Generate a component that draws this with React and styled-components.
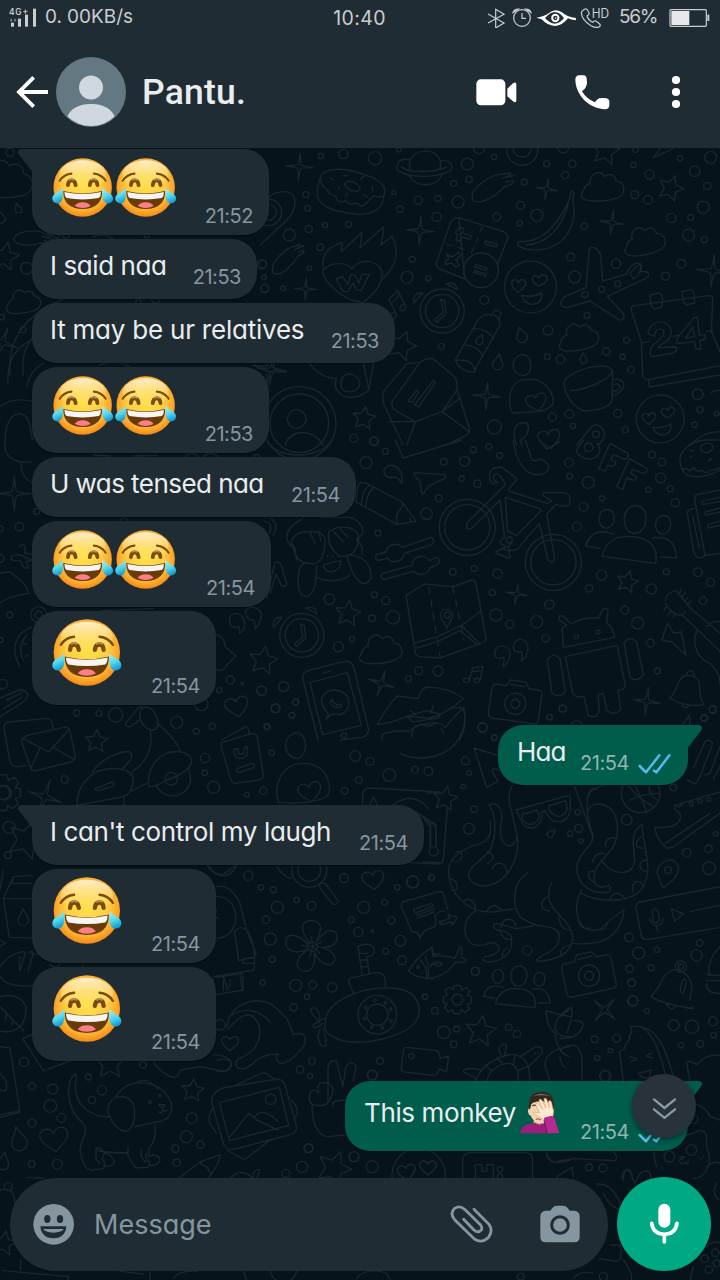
import React from "react";
import styled, { createGlobalStyle, css } from "styled-components";

const color = {
  bar: "#202c33",
  wall: "#06131a",
  doodle: "#19262c",
  incoming: "#202c33",
  outgoing: "#005c4b",
  text: "#e9edef",
  muted: "#8696a0",
  accent: "#00a884",
  tick: "#53bdeb",
  status: "#c9cdcf",
};

const GlobalStyle = createGlobalStyle`
  * { box-sizing: border-box; }
  body {
    margin: 0;
    background: ${color.wall};
    font-family: Inter, "Liberation Sans", sans-serif;
    font-feature-settings: "cv11" 1;
    font-optical-sizing: none;
  }
  svg { display: block; flex: none; }
`;

const Screen = styled.main`
  display: grid;
  grid-template-rows: 148px 1132px;
  width: 720px;
  height: 1280px;
  overflow: hidden;
`;

/* ---------- top ---------- */

const Top = styled.header`
  display: flex;
  flex-direction: column;
  background: ${color.bar};
`;

const StatusBar = styled.div`
  display: grid;
  grid-template-columns: 1fr auto 1fr;
  height: 36px;
  padding: 0 10px 0 9px;
  color: ${color.status};
  font-size: 19px;
  line-height: 34px;
`;

const StatusSide = styled.div`
  display: flex;
  align-items: center;
  height: 34px;
  justify-content: ${(p) => (p.$end ? "flex-end" : "flex-start")};
`;

const StatusText = styled.span`
  letter-spacing: ${(p) => p.$track || 0}px;
  margin-left: ${(p) => p.$ml || 0}px;
  white-space: nowrap;
`;

const ClockText = styled(StatusText)`
  font-size: 19.5px;
  line-height: 36px;
`;

const Dot = styled.span`
  margin-right: 5px;
`;

const StatusGlyph = styled.svg`
  margin-left: ${(p) => p.$ml || 0}px;
  fill: none;
  stroke: ${color.status};
  stroke-width: 3.6;
`;

const TitleBar = styled.div`
  display: flex;
  align-items: center;
  height: 112px;
  padding: 0 38px 0 16px;
`;

const ContactName = styled.h1`
  flex: 1;
  margin: 0 0 0 16px;
  color: ${color.text};
  font: 500 35.5px/42px Roboto, sans-serif;
  letter-spacing: 0.2px;
`;

const Actions = styled.div`
  display: flex;
  align-items: center;
`;

const ActionSlot = styled.span`
  margin-right: ${(p) => p.$mr}px;
  padding-top: 1px;
`;

const Avatar = styled.svg`
  margin-left: 7px;
`;

/* ---------- chat ---------- */

const Chat = styled.section`
  display: grid;
  grid-template: 1132px / 720px;
  background: ${color.wall};
  > * { grid-area: 1 / 1; }
`;

const Wall = styled.svg`
  fill: none;
  stroke: ${color.doodle};
  stroke-width: 4.2;
  stroke-linecap: round;
  stroke-linejoin: round;
`;

const Foreground = styled.div`
  display: flex;
  flex-direction: column;
  justify-content: space-between;
  z-index: 1;
`;

const Messages = styled.div`
  display: flex;
  flex-direction: column;
  gap: 4px;
  padding: 1px 32px 0;
`;

const Bubble = styled.div`
  position: relative;
  display: flex;
  justify-content: space-between;
  align-items: flex-end;
  align-self: ${(p) => (p.$out ? "flex-end" : "flex-start")};
  width: ${(p) => p.$w}px;
  height: ${(p) => p.$h}px;
  margin-top: ${(p) => (p.$gap ? 16 : 0)}px;
  padding: 0 16px 0 ${(p) => (p.$emoji ? 20 : p.$out ? 19 : 18)}px;
  border-radius: 25px;
  background: ${(p) => (p.$out ? color.outgoing : color.incoming)};
  box-shadow: 0 1px 1px rgba(0, 0, 0, 0.35);
  ${(p) => p.$tail && (p.$out
    ? css`border-top-right-radius: 0;`
    : css`border-top-left-radius: 0;`)}
`;

const Tail = styled.svg`
  position: absolute;
  top: 0;
  ${(p) => (p.$out ? "right: -14px; transform: scaleX(-1);" : "left: -14px;")}
  fill: ${(p) => (p.$out ? color.outgoing : color.incoming)};
`;

const Body = styled.div`
  display: flex;
  align-self: flex-start;
  padding-top: ${(p) => p.$pt}px;
  color: ${color.text};
  font-size: 26px;
  line-height: 32px;
  letter-spacing: ${(p) => p.$track || 0}px;
  white-space: pre;
`;

const Meta = styled.div`
  display: flex;
  align-items: flex-end;
  gap: 9px;
  padding-bottom: ${(p) => p.$pb}px;
  color: ${(p) => (p.$out ? "#91b6ad" : color.muted)};
  font-size: 20px;
  line-height: 24px;
  letter-spacing: -0.45px;
`;

const Composer = styled.footer`
  display: flex;
  gap: 9px;
  align-items: flex-end;
  padding: 0 9px 9px 10px;
`;

const Field = styled.div`
  display: flex;
  align-items: center;
  width: 598px;
  height: 93px;
  padding: 0 28px 0 23px;
  border-radius: 47px;
  background: ${color.incoming};
`;

const Placeholder = styled.span`
  flex: 1;
  margin-left: 20px;
  color: ${color.muted};
  font-size: 27px;
  line-height: 34px;
`;

const CameraSlot = styled.span`
  margin-left: 47px;
  padding-bottom: 2px;
`;

const MicButton = styled.button`
  display: grid;
  place-items: center;
  width: 94px;
  height: 94px;
  padding: 0;
  border: 0;
  border-radius: 50%;
  background: ${color.accent};
`;

const JumpButton = styled.button`
  position: absolute;
  right: -8px;
  top: -7px;
  display: grid;
  place-items: center;
  width: 64px;
  height: 64px;
  padding: 6px 0 0;
  border: 0;
  border-radius: 50%;
  background: #28323a;
  box-shadow: 0 2px 5px rgba(0, 0, 0, 0.45);
`;

/* ---------- drawings ---------- */

const JoyFace = ({ size }) => (
  <svg width={size * 1.04} height={size} viewBox="-104 -100 208 200" role="img" aria-label="face with tears of joy">
    <defs>
      <radialGradient id="joySkin" cx="0.5" cy="0.45" r="0.56">
        <stop offset="0" stopColor="#ffe04a" />
        <stop offset="0.55" stopColor="#fdcf45" />
        <stop offset="0.82" stopColor="#fbab2e" />
        <stop offset="1" stopColor="#f48512" />
      </radialGradient>
      <linearGradient id="joyShine" x1="0" y1="0" x2="0" y2="1">
        <stop offset="0" stopColor="#fff1d6" stopOpacity="0.95" />
        <stop offset="1" stopColor="#ffe870" stopOpacity="0" />
      </linearGradient>
      <linearGradient id="joyTear" x1="0" y1="0" x2="0.3" y2="1">
        <stop offset="0" stopColor="#b4f3f5" />
        <stop offset="0.6" stopColor="#54d5ea" />
        <stop offset="1" stopColor="#159fd6" />
      </linearGradient>
    </defs>
    <circle r="99" fill="url(#joySkin)" />
    <ellipse cy="-44" rx="78" ry="48" fill="url(#joyShine)" />
    <path d="M-66 12Q0 28 66 12Q66 72 0 73Q-66 72 -66 12Z" fill="#693b09" />
    <path d="M-62 15Q0 29 62 15Q62 30 55 36Q0 45 -55 36Q-62 30 -62 15Z" fill="#f6f5f3" />
    <path d="M-27 63Q-20 50 0 50Q20 50 27 63Q0 76 -27 63Z" fill="#fb7f88" />
    <g fill="none" stroke="#7b4b0a" strokeLinecap="round">
      <path d="M-50 -8Q-49 -24 -38 -24Q-26 -24 -24 -8M24 -8Q26 -24 38 -24Q49 -24 50 -8" strokeWidth="13" />
      <path d="M-78 -23Q-63 -45 -38 -47M78 -23Q63 -45 38 -47" strokeWidth="7" />
    </g>
    <path d="M-46 -26Q-38 -31 -30 -26M30 -26Q38 -31 46 -26" fill="none" stroke="#a98a62" strokeWidth="6" strokeLinecap="round" />
    <path d="M-68 2Q-64 16 -68 35Q-72 54 -86 54Q-104 52 -103 36Q-101 24 -88 18Q-76 12 -68 2Z" fill="url(#joyTear)" />
    <path d="M68 2Q64 16 68 35Q72 54 86 54Q104 52 103 36Q101 24 88 18Q76 12 68 2Z" fill="url(#joyTear)" />
  </svg>
);

const FacepalmFigure = () => (
  <svg width="41" height="43" viewBox="538 92 123 129" role="img" aria-label="man facepalming">
    <path d="M582 168L606 194L628 176V206H582Z" fill="#dfb68f" />
    <path d="M541 219Q542 197 568 191L586 187Q602 198 618 186L640 219Z" fill="#9c1f7c" />
    <path d="M567 146Q562 149 568 163Q574 164 577 174Q588 190 606 190Q628 188 636 162Q643 161 642 146L636 120H574Z" fill="#f4d3b2" />
    <path d="M568 148Q562 96 605 94Q648 94 642 148Q638 147 637 132Q632 124 605 123Q579 123 574 134Q573 146 568 148Z" fill="#33281f" />
    <path d="M580 108Q604 92 632 108Q606 101 580 108Z" fill="#75685c" />
    <path d="M578 137Q584 132 591 136" fill="none" stroke="#51402f" strokeWidth="4" />
    <path d="M588 177Q598 173 604 179" fill="none" stroke="#8a4b40" strokeWidth="3" />
    <path d="M612 177Q600 171 583 161Q578 155 588 156L600 158L588 132Q588 126 594 129L609 147L598 120Q601 114 606 119L619 143L613 116Q617 111 621 117L629 142L627 123Q631 117 635 125L641 153Q642 168 634 177Z" fill="#ffead0" stroke="#d9ab82" strokeWidth="2" />
    <path d="M613 179Q612 170 620 170L636 166Q643 168 646 178L659 219H622Z" fill="#b42a91" />
    <path d="M613 180L622 219" stroke="#76145d" strokeWidth="3" />
  </svg>
);

const BackArrow = () => (
  <svg width="33" height="32" viewBox="48 228 99 96" fill="none" stroke="#fff" strokeWidth="11.5">
    <path d="M101 232L57 276L101 320M57 276H144" />
  </svg>
);

const VideoIcon = () => (
  <svg width="41" height="27" viewBox="347 239 123 81" fill="#fff">
    <rect x="348" y="240" width="87" height="78" rx="14" />
    <path d="M441 268L458 252Q468 245 468 256V302Q468 313 458 306L441 291Z" />
  </svg>
);

const CallIcon = () => (
  <svg width="35" height="35" viewBox="644 227 105 105" fill="#fff">
    <path d="M656 228H670Q678 229 679 238L680 249Q681 256 677 262Q674 269 665 276Q677 297 703 309Q711 300 716 297Q720 296 727 296L738 297Q747 299 747 307V318Q746 330 735 330C682 328 645 284 645 240Q646 229 656 228Z" />
  </svg>
);

const MenuDots = () => (
  <svg width="12" height="34" viewBox="-6 -17 12 34" fill="#fff">
    <circle cy="-12" r="4.1" /><circle r="4.1" /><circle cy="12" r="4.1" />
  </svg>
);

const DoubleTick = () => (
  <svg width="34" height="22" viewBox="712 156 102 66" fill="none" stroke={color.tick} strokeWidth="7.5" strokeLinejoin="round" strokeLinecap="round">
    <path d="M717 195L736 214L776 163M760 209L767 214L806 163" />
  </svg>
);

const TailShape = ({ out }) => (
  <Tail $out={out} width="15" height="23" viewBox="0 0 15 23">
    <path d="M15 0H3.2Q-1.3 .6 .6 5L14 22.5H15Z" />
  </Tail>
);

const SignalIcon = () => (
  <svg width="28" height="21" viewBox="27 22 84 63" fill={color.status}>
    <rect x="33" y="69" width="9" height="12" />
    <rect x="54" y="57" width="9" height="24" />
    <rect x="75" y="45" width="9" height="36" />
    <rect x="99" y="27" width="9" height="54" />
    <text x="27" y="47" fontSize="25" fontWeight="600" textLength="57">4G+</text>
    <path d="M29 62L36 56V67ZM50 62L43 56V67Z" opacity="0.55" />
  </svg>
);

const StatusIcons = () => (
  <>
    <StatusGlyph width="19" height="21" viewBox="385 22 57 63" strokeWidth="3">
      <path d="M388 43L436 70L411 85V29L436 44L388 70" />
    </StatusGlyph>
    <StatusGlyph $ml={6} width="20" height="20" viewBox="460 22 60 60">
      <circle cx="490" cy="55" r="25" />
      <path d="M490 40V56H502" />
      <path d="M463 39Q466 28 479 28L463 39ZM517 39Q514 28 501 28L517 39Z" fill={color.status} />
    </StatusGlyph>
    <StatusGlyph $ml={4} width="41" height="18" viewBox="533 24 123 54">
      <path d="M534 53Q557 50 571 40Q592 22 613 38Q624 49 653 54L652 61Q638 59 629 55Q612 77 590 78Q566 76 550 58ZM560 54Q590 88 617 54Q591 18 560 54Z" fill="#fff" fillRule="evenodd" stroke="none" />
      <circle cx="591" cy="54" r="9.5" stroke="#fff" strokeWidth="6" />
      <circle cx="592" cy="54" r="2.5" fill="#fff" stroke="none" />
    </StatusGlyph>
    <StatusGlyph $ml={3} width="30" height="31" viewBox="664 4 90 93">
      <path d="M679 25Q684 23 687 29L691 36Q693 41 685 46Q688 57 702 65Q708 58 713 62L723 70Q727 74 722 78Q713 84 697 75Q671 59 668 38Q668 30 679 25Z" />
      <text x="699" y="51" fontSize="38" fill={color.status} stroke="none" textLength="52" lengthAdjust="spacingAndGlyphs">HD</text>
    </StatusGlyph>
  </>
);

const Battery = () => (
  <StatusGlyph $ml={12} width="41" height="19" viewBox="926 24 123 57">
    <rect x="929" y="29" width="109" height="50" rx="3" />
    <path d="M933 33H987V75H933Z" fill="#e6e8e9" stroke="none" />
    <path d="M1041 44H1047V63H1041Z" fill={color.status} stroke="none" />
  </StatusGlyph>
);

const SmileIcon = () => (
  <svg width="41" height="41" viewBox="98 731 123 123">
    <circle cx="160" cy="792" r="61" fill={color.muted} />
    <g fill={color.incoming}>
      <ellipse cx="141" cy="776" rx="9.5" ry="12" /><ellipse cx="179" cy="776" rx="9.5" ry="12" />
      <path d="M120 798H198Q196 833 159 834Q123 833 120 798Z" />
    </g>
    <path d="M129 806H190Q185 816 159 817Q134 816 129 806Z" fill={color.muted} />
  </svg>
);

const ClipIcon = () => (
  <svg width="43" height="39" viewBox="330 434 129 117" fill="none" stroke={color.muted} strokeWidth="8.5" strokeLinecap="round">
    <path d="M402 447L447 492Q460 510 446 531Q426 551 403 536L344 478Q328 459 344 444Q359 434 374 447L421 493Q431 507 419 513Q409 517 401 508L371 477" />
  </svg>
);

const CameraIcon = () => (
  <svg width="40" height="38" viewBox="599 431 120 114">
    <path d="M617 448H630L636 440Q642 433 650 433H668Q676 433 682 440L688 448H701Q718 449 718 466V526Q718 543 701 543H617Q600 543 600 526V466Q600 449 617 448Z" fill={color.muted} />
    <circle cx="659" cy="491" r="25" fill={color.muted} stroke={color.incoming} strokeWidth="9" />
  </svg>
);

const MicIcon = () => (
  <svg width="31" height="42" viewBox="926 430 93 126" fill="none" stroke="#fff" strokeWidth="11" strokeLinecap="round">
    <rect x="954" y="432" width="36" height="72" rx="18" fill="#fff" stroke="none" />
    <path d="M934 491Q938 523 972 524Q1006 523 1010 491M972 525V547" />
  </svg>
);

const ChevronsDown = () => (
  <svg width="25" height="24" viewBox="934 112 76 72" fill="none" stroke="#8d9aa3" strokeWidth="7" strokeLinecap="round">
    <path d="M940 119L972 145L1004 119M940 149L972 175L1004 149" />
  </svg>
);

/* ---------- wallpaper ---------- */

const STAR = "M0-100L28-38L95-31L45 15L59 81L0 48L-59 81L-45 15L-95-31L-28-38Z";
const SPARK = "M0-100Q8-18 14-14Q18-8 100 0Q18 8 14 14Q8 18 0 100Q-8 18-14 14Q-18 8-100 0Q-18-8-14-14Q-8-18 0-100Z";
const CLOUD = "M-88 10C-80-20-62-22-56-20C-62-60-20-92 10-54C40-76 62-50 60-34C106-26 110 30 62 46C10 62-40 60-70 54C-100 46-104 28-88 10Z";
const HEART = "M0 80C-50 40-100 0-90-40C-80-80-20-86 0-38C20-86 80-80 90-40C100 0 50 40 0 80Z";
const DROP = "M0-100C20-40 62-10 62 30C62 110-62 110-62 30C-62-10-20-40 0-100Z";
const NOTE = "M-40 60L-40-60L50-90V40M-40-25L50-55M-40 60A26 20-20 1 1-42 50M50 40A26 20-20 1 1 48 30";
const BELL = "M-78 52C-40 20-60-40-20-62C20-74 50-60 56-20C62 20 70 44 88 60C30 80-20 74-78 52ZM-18 70Q0 100 22 74M-12-66A17 17 0 1 1 20-64";
const CAMERA = "M-90-40Q-90-56-74-56H-40L-28-78H28L40-56H74Q90-56 90-40V50Q90 66 74 66H-74Q-90 66-90 50ZM-26-62H26M0-34A38 38 0 1 0 1-34ZM0-12A16 16 0 1 0 1-12Z";
const PEOPLE = "M0-90C44-90 40-10 0-10C-40-10-44-90 0-90ZM-84 66Q-76 0 0 0Q76 0 72 70ZM-82-70C-52-70-54-16-82-16C-110-16-112-70-82-70ZM82-70C52-70 54-16 82-16C110-16 112-70 82-70ZM-90 44L-134 40Q-120-20-56 0M84 50L130 48Q120-20 56-2";
const CLOCK = "M0-66A66 66 0 1 0 1-66ZM0-50A50 50 0 1 0 1-50ZM-4-34L4 4L-22 26L-16 34L12 8L8-30ZM-84-24Q-90-56-58-54ZM12-82Q42-90 46-64Z";
const LOVE = "M0-78A78 78 0 1 0 1-78ZM-26 24Q0 34 34 18Q36 50 8 52Q-18 52-26 24ZM-36 16C-66-6-56-20-48-22C-38-24-36-12-36-12C-30-28-10-24-14-8C-16 2-30 6-36 16ZM26-2C0-16 4-30 12-34C22-36 26-26 26-26C34-44 54-36 50-22C46-10 34-10 26-2Z";
const COMET = "M-58 70C-90 40-30-50 20-66L40-78M36-58L60-76M38-40L62-54Q68-44 50-30L40-24M-58 70C-20 80 20 20 40-24M40-78Q48-74 40-66L20-48";
const GEAR = "M-14-62H14L20-42L40-54L56-34L44-18L62-12V14L44 20L54 40L34 56L18 44L12 62H-14L-20 44L-40 54L-56 34L-44 18L-62 12V-14L-44-20L-54-40L-34-56L-18-44ZM0-24A24 24 0 1 0 1-24Z";

const SHAPES = { STAR, SPARK, CLOUD, HEART, DROP, NOTE, BELL, CAMERA, PEOPLE, CLOCK, LOVE, COMET, GEAR };

// Each region: origin on the screen, bubbles [x, y, r], stamps [shape, x, y, scale, turn] and free lines, in thirds of a pixel.
const REGIONS = [
  {
    at: [260, 145],
    dots: [[183,33,8],[250,27,14],[345,40,20],[622,57,18],[702,36,8],[860,56,9],[937,56,11],[915,90,11],[627,103,10],[581,115,9],[793,111,9],[402,143,6],[475,166,12],[534,160,9],[594,171,18],[420,193,10],[138,148,9],[143,190,9],[146,252,11],[195,240,8],[266,238,9],[88,270,18],[181,307,10],[530,216,14],[710,216,12],[782,181,12],[831,211,18],[779,235,8],[973,244,10],[1120,60,8],[1126,14,8],[1169,88,14],[1124,149,12],[1164,164,13],[1260,40,8],[1352,37,18],[1304,79,16],[1342,123,11],[1330,187,18],[1234,219,14],[1292,217,9],[1286,270,18],[1333,284,9],[1264,356,13],[1217,394,12],[932,336,12],[944,396,18],[1068,356,14],[457,343,9],[441,397,18],[505,400,8],[148,370,7],[69,430,7],[14,430,12],[673,465,13],[544,604,9],[864,556,14],[981,511,9],[1100,586,9],[1039,619,11],[1088,635,8],[862,635,9],[901,643,13],[1113,674,10],[703,846,21],[877,816,12],[928,807,13],[939,843,8],[1073,805,12],[1096,854,9],[1313,748,16],[1320,794,9],[1304,839,8],[281,880,12],[343,888,13],[416,14,7],[657,10,16],[910,8,16],[1370,806,7],[975,449,9],[1025,433,9],[1073,416,9],[5,358,14],[1008,868,10],[110,822,28],[787,15,46],[787,8,28],[118,835,110],[118,835,88],[663,376,52],[25,202,40],[25,202,24]],
    stamps: [["SPARK",118,65,40,4],["SPARK",860,132,31,10],["SPARK",480,257,43,4],["SPARK",1056,233,36,8],["SPARK",137,432,33,2],["SPARK",680,753,40,4],["SPARK",1358,378,48,6],["SPARK",28,670,50,10],["STAR",1232,130,40,20],["STAR",1036,18,44,10],["STAR",312,820,36,8],["STAR",425,602,46,20],["CLOUD",1028,130,66,0],["CLOUD",1154,292,64,-8],["CLOUD",956,580,62,-6],["CLOCK",546,498,100,0],["LOVE",811,426,100,0],["LOVE",1200,822,92,-4],["DROP",784,570,25,-18],["DROP",714,652,25,8],["DROP",970,640,17,-6],["DROP",660,584,17,25],["COMET",700,130,78,20],["COMET",86,345,66,8],["NOTE",412,478,40,-28],["HEART",830,772,34,-14],["HEART",868,882,36,-10]],
    lines: [
      "M412 63C416 38 440 42 450 46C470 8 530 10 540 46C590 46 580 78 560 82C510 102 440 94 418 80Q408 72 412 63ZM426 66C440 84 520 84 560 66M450 46Q446 62 450 74M540 46Q544 62 540 72M446 90C466 128 526 130 546 90",
      "M180 100C190 62 260 70 310 88C370 104 380 132 372 150C370 200 320 214 280 206C210 200 166 176 172 140C172 124 178 112 180 100ZM180 100C184 130 200 126 206 142C210 156 220 142 228 156C232 178 252 170 256 166C272 190 286 166 296 178C320 196 326 150 346 154C360 160 372 152 372 150M254 116C266 98 304 120 300 134C286 146 256 132 254 116ZM210 98L220 106M250 92H260M302 102L312 94M234 124L238 134M262 146L256 154M310 148L322 156M338 128V138",
      "M0 200C10 150 50 140 80 140C120 148 106 200 80 226L0 300",
      "M190 376C180 320 220 300 246 292L244 320L306 262L300 308L370 246Q370 280 362 300L396 274C424 330 402 370 364 406M302 470C250 470 180 400 190 376C210 350 260 350 276 372C300 334 366 344 366 392C360 440 320 460 302 480M228 402L248 394L264 420L272 390H286L296 416L306 388H328L304 436H290L280 414L262 440H250Z",
      "M596 218L730 260Q746 268 742 282L712 360M614 402L540 372Q526 364 530 350L572 232Q580 216 596 218ZM666 246L660 262M654 278L648 292M642 306L634 324M562 298L576 302M594 308L612 314M600 246L612 252L606 264L634 272L630 282L606 276L598 290L588 284L594 270L586 262ZM676 288L712 298L708 306L674 296ZM560 328L576 336L596 322L602 332L588 344L598 362L588 366L574 354L558 358L556 348L568 342ZM648 358L682 370L678 376L644 366ZM644 376L680 388L676 394L642 382Z",
      "M934 138L942 142L938 164C958 240 910 330 796 312L772 302L776 290C850 294 890 240 926 170ZM924 180C904 250 860 296 800 300M772 302L784 306",
      "M988 310Q1010 300 1022 330L1028 408L1098 388C1114 356 1130 350 1144 358V380C1170 376 1174 394 1150 404L1042 454L1090 506Q1098 528 1076 524L990 468L920 488Q890 484 912 456L978 428ZM1110 386Q1130 360 1142 358Q1144 390 1120 402Z",
      "M1114 496Q1112 484 1122 482L1346 452Q1358 452 1358 462L1354 560L1380 620M1114 496L1144 590L1148 690Q1150 704 1164 704L1380 662M1166 704L1168 726L1380 690M1170 450L1196 444Q1206 446 1208 462L1206 486L1184 492Q1174 490 1172 470ZM1266 440L1292 434Q1302 436 1302 448L1304 474L1280 480Q1270 476 1268 460ZM1144 592L1166 590M1240 574L1258 570M1338 560L1358 556",
      "M1164 566C1170 520 1230 520 1234 560C1234 590 1196 600 1194 608L1248 606Q1254 620 1240 624L1174 636Q1164 620 1178 600C1196 590 1218 570 1210 556C1196 544 1182 560 1184 574ZM1302 518L1312 516L1318 572L1336 568V582L1320 586L1322 612H1308L1304 590L1252 596Q1246 586 1256 574ZM1298 546L1276 580L1304 574Z",
      "M698 504L706 494L724 504L718 520M686 508Q720 508 720 540L640 682Q600 680 586 646L650 530Q664 508 686 508ZM644 550Q680 552 700 580M618 600Q650 602 668 630M586 646Q640 640 646 680",
      "M480 652Q510 630 530 650L582 694Q594 706 590 730L628 850Q632 866 616 872L560 900M480 652L440 656L370 740Q366 760 372 780L430 900M480 652L396 770Q392 790 412 800L466 830L546 800L590 736M466 830L440 900M388 830L466 830M546 800L628 860M546 800L600 760M520 706L526 712L476 786L464 780ZM470 736L476 742L456 772L444 768Z",
      "M786 628C820 628 822 690 790 692C752 686 748 640 786 628ZM760 804C740 790 742 700 800 704C860 694 890 760 876 780Q860 796 830 800Z",
      "M912 716C910 680 1050 640 1058 680L1056 770Q1040 796 970 798C930 780 914 740 912 716ZM930 736C960 740 1050 706 1056 680M1058 704C1100 694 1106 740 1056 752M1062 718C1090 712 1086 738 1060 738",
      "M770 900C750 850 770 830 800 834C812 850 800 880 784 880V900M950 900L994 846Q1004 834 1020 844Q1040 860 1030 880L1016 900M1290 900Q1330 860 1380 860M1180 38L1220 20L1260 0M1180 38L1200 10M1354 742Q1370 734 1380 736",
      "M340 656L326 736Q280 770 246 750Q216 730 230 700Q180 700 150 656M246 700C270 670 300 700 300 716C296 744 250 752 242 720ZM310 656L326 730",
      "M76 900C90 850 160 850 190 900",
    ],
  },
  {
    at: [260, 440],
    dots: [[318,68,18],[376,34,9],[342,4,12],[551,65,10],[614,64,15],[640,30,9],[687,20,9],[719,46,9],[605,116,8],[652,131,11],[536,175,10],[500,221,17],[354,279,9],[578,395,10],[642,385,9],[713,401,14],[697,458,9],[1176,44,10],[1206,66,11],[927,68,13],[929,109,9],[985,127,18],[1202,114,15],[1165,149,8],[1231,146,9],[1026,175,8],[1246,188,12],[971,201,13],[950,260,13],[1025,406,15],[987,445,11],[1174,447,15],[1219,395,9],[1314,397,13],[1352,427,12],[1329,482,11],[208,478,16],[343,464,9],[377,482,12],[399,532,20],[336,535,10],[276,597,8],[235,620,15],[708,525,18],[749,553,12],[830,545,18],[868,494,14],[857,595,11],[1094,510,12],[1133,549,18],[1171,609,12],[1192,693,9],[476,692,12],[534,693,15],[445,716,9],[71,740,15],[107,786,9],[47,805,13],[96,826,9],[21,860,9],[5,752,14],[252,886,8],[668,862,13],[869,832,8],[908,806,11],[1358,808,11],[1332,834,9],[703,892,8],[622,262,84],[622,262,68],[880,367,84],[880,367,68],[748,300,9],[562,525,9],[949,590,6],[1014,576,6],[986,22,13],[950,860,18]],
    stamps: [["SPARK",770,462,31,10],["SPARK",364,730,40,18],["SPARK",1160,784,41,8],["STAR",264,521,40,8],["STAR",1102,426,34,14],["STAR",10,662,44,10],["CLOUD",362,632,66,-2],["CLOCK",125,586,100,0],["PEOPLE",1120,290,104,6],["NOTE",646,706,34,14],["CAMERA",766,788,84,8],["BELL",1282,748,64,8],["DROP",560,535,30,180]],
    lines: [
      "M20 0C50 60 180 60 215 0M405 0L430 54L605 0",
      "M372 90Q380 72 404 78Q430 90 426 130Q410 106 400 112Q370 116 372 90ZM462 98L556 104Q560 116 540 122L506 138L490 162Q484 164 484 150L480 126L462 104Z",
      "M288 186L294 136Q300 122 320 130L426 186L468 244L412 254L288 186ZM330 134Q306 150 304 196M342 142Q318 160 318 204M426 186Q430 200 418 212Q404 226 412 254M468 244Q450 250 448 232",
      "M620 250L736 134Q716 90 700 108Q700 126 712 126Q696 140 690 120Q680 80 726 82L766 112Q774 120 760 130L744 152L860 190Q870 186 874 182L850 168V158H910Q936 160 928 196L900 198L890 192L860 222L884 354Q880 374 864 360L838 250L774 326Q760 336 732 328M620 250Q616 270 634 266L720 180L734 294M736 172L840 206Q846 214 836 220L770 286L742 274ZM734 294Q716 296 722 310L740 320L710 334Q704 342 716 342L742 354Q756 356 748 344L744 320L758 306",
      "M118 242Q140 220 180 232L270 232Q300 240 310 270Q308 290 292 294L290 300Q312 320 306 342M118 242Q70 270 84 306Q88 318 104 322L110 360M104 322C76 310 110 270 140 276Q190 270 196 300Q192 380 150 370Q104 370 98 310M150 276L164 310M176 276L184 304M206 276C240 250 300 260 296 300Q290 350 240 350Q200 320 206 276ZM222 276L250 306M240 266L262 290M190 376Q220 366 242 362Q244 390 216 396Q194 396 190 376ZM170 412Q220 436 270 406M170 376C170 440 160 470 136 470C110 464 112 420 118 390Q120 372 140 368M266 344Q330 350 334 410Q326 434 306 430Q276 410 262 350M202 346V350M218 346V350",
      "M378 336L350 344Q340 356 356 362L382 354A28 28 0 0 0 432 340L516 314Q528 300 514 292L426 322A28 28 0 0 0 378 336ZM456 376L368 400Q356 412 372 418L462 394A28 28 0 0 0 510 382L532 374Q546 360 530 352L508 362A28 28 0 0 0 456 376Z",
      "M438 466L494 432L578 440L636 420Q646 422 648 432L678 594Q680 604 668 608L540 654L480 650Q468 648 466 638ZM462 610L532 590L604 556L660 516M470 624L534 604L600 572L650 612M604 556L660 612",
      "M760 0C770 90 820 120 860 96L868 80Q860 66 840 56Q826 66 816 60L796 0M840 0L860 28L900 4",
      "M956 20L970 0M956 20Q940 40 966 50Q990 66 1010 50Q1030 30 1010 10M1050 10L1104 40Q1108 54 1094 58L1060 44L1052 58L1066 66Q1070 76 1056 78L1044 76L1036 94L1016 86ZM1108 56L1162 86Q1164 96 1150 100L1118 88L1112 100L1130 110Q1130 122 1118 120L1100 114L1088 148L1070 140Z",
      "M1262 74C1250 40 1290 0 1340 0H1380M1262 74Q1262 90 1280 86Q1290 100 1300 82Q1310 100 1324 90Q1340 104 1350 92L1380 84M1268 90C1280 120 1340 114 1380 90M1320 24C1330 4 1366 6 1356 28C1346 44 1326 40 1320 24ZM1290 30L1300 34M1288 52L1296 50M1346 62L1354 56",
      "M1380 150L1312 164Q1302 168 1304 180L1334 340Q1336 350 1324 354L1310 350Q1302 340 1300 330L1282 220Q1280 208 1304 206M1380 172L1326 184V194L1380 184M1380 204L1336 216V226L1380 216M1380 244L1344 254V264L1380 256M1334 346L1380 340M1298 230L1318 324",
      "M910 622L908 584Q900 560 920 556L898 540Q894 524 908 528L934 552Q970 530 1016 534L1030 506Q1048 500 1042 530L1040 548Q1060 562 1064 592ZM916 650L1072 616L1096 738Q1094 750 1074 750L1082 810Q1060 830 1040 810L1030 760L1014 764L1018 812Q1010 840 984 826L972 770L950 770Q938 766 936 750ZM862 660Q880 634 900 656L916 754Q900 776 876 760ZM1092 608Q1110 586 1130 606L1150 704Q1130 730 1110 712Z",
      "M1216 482Q1220 456 1248 452L1276 486L1286 500L1380 580M1216 490Q1240 530 1266 524L1276 514M1266 524L1380 634M1310 574C1292 620 1320 660 1350 670Q1380 700 1380 730M1340 560Q1360 540 1380 545M1264 448L1258 462M1276 456L1266 472M1284 472L1274 484M1292 484L1282 494M1218 500L1212 512M1232 512L1226 524M1244 520L1240 534M1222 550L1242 580L1264 576L1278 646L1236 606L1206 600Z",
      "M704 640C706 610 746 610 750 640Q750 670 728 680Q736 660 730 652Q704 660 704 640ZM760 620C762 590 802 590 804 624Q802 654 784 662Q790 642 784 634Q758 640 760 620Z",
      "M150 690L254 664Q274 662 282 684L326 870Q324 888 306 892L240 900M150 690Q126 696 128 716L174 900M150 728L262 698L304 856L188 884ZM188 700L214 692M198 838L206 822C160 774 200 750 224 750C280 754 276 816 240 824L216 822ZM210 784Q216 806 240 802Q250 796 238 792L230 796L218 784Q220 774 210 784Z",
      "M352 854Q380 800 412 768L474 776Q484 736 512 742Q570 744 610 776Q560 820 510 834L440 830Q390 850 352 854ZM440 830L498 812L540 822Q540 836 520 836L460 846ZM452 812L466 824M520 798L512 818M366 884Q390 870 450 874Q460 856 500 852Q540 842 556 862Q600 810 612 804Q624 860 598 900M460 870L454 890M544 866L552 882M366 884V900M480 852L500 860L530 850",
      "M20 474L44 370Q54 360 64 376L80 430Q76 444 64 436L48 402L30 460M14 244Q40 250 28 280M30 234Q60 250 40 286",
      "M1236 900L1288 826L1290 860",
    ],
  },
  {
    at: [0, 145],
    dots: [[80,370,18],[69,555,9],[5,517,8],[198,270,10],[467,463,12],[415,470,8],[440,270,8],[30,22,12],[788,358,12],[792,397,7],[794,431,12]],
    stamps: [["STAR",15,335,44,12],["CLOUD",70,473,54,-4],["CLOUD",15,108,86,6],["SPARK",8,592,46,20],["DROP",54,190,16,-18],["DROP",0,215,22,-18],["COMET",98,284,62,50]],
    lines: ["M140 262L170 280L190 262M278 276Q310 262 340 282M30 690C20 560 100 500 190 462M70 690Q60 600 120 560L180 600M300 660Q350 640 400 670"],
  },
  {
    at: [0, 340],
    dots: [[58,560,13],[0,566,9],[110,514,9],[29,825,9],[116,824,24],[116,824,11],[691,1020,12],[658,1051,8],[785,1053,14],[851,1040,15],[727,1030,4],[8,1032,14],[0,900,8],[771,352,9],[0,655,12]],
    stamps: [["SPARK",43,461,50,0],["SPARK",815,90,44,8]],
    lines: [
      "M0 200Q40 170 96 184M16 330C10 260 30 220 60 222Q80 220 90 260L98 300M16 330Q30 372 96 366M64 370Q60 410 100 430M24 130C20 60 50 20 96 0M80 140Q90 90 130 70",
      "M58 620Q68 606 76 620L74 640L96 642M96 660L78 666L86 684Q74 690 66 674L62 662L38 662Q28 650 40 646L58 644Z",
      "M0 700Q30 690 40 704Q80 730 86 760Q20 770 0 790",
      "M60 980C30 930 44 880 96 860M70 960Q50 920 80 886M70 910L80 914M76 950L84 944",
      "M648 884Q670 884 676 920L708 948L680 974Q676 994 650 990",
      "M690 850C680 810 730 810 734 850Q734 874 718 880Q722 864 714 860Q694 866 690 850ZM736 820C740 790 782 800 784 826Q780 858 764 866Q768 848 760 840Q740 840 736 820Z",
      "M360 540L374 530L384 542M280 345L330 348M400 348L470 346M555 350Q575 330 596 350M610 350Q630 330 654 350M300 812L460 806",
    ],
  },
  {
    at: [0, 690],
    dots: [[230,69,9],[297,70,9],[347,75,21],[530,97,18],[589,124,9],[637,109,9],[615,204,14],[614,248,8],[641,292,18],[740,314,7],[790,302,11],[815,188,8],[801,110,8],[826,55,13],[887,36,9],[875,76,8],[194,268,11],[27,412,18],[23,496,10],[1066,198,16],[1110,214,12],[1168,255,19],[1076,270,10],[1034,302,10],[1245,239,10],[1285,244,13],[745,557,14],[783,592,8],[820,600,9],[832,652,18],[798,689,11],[811,747,18],[816,808,9],[890,630,8],[935,647,13],[1032,565,13],[1091,652,18],[1154,637,9],[1053,690,9],[1174,691,11],[1075,726,14],[1117,723,4],[1192,592,8],[1238,575,18],[1295,563,9],[1201,752,16],[1157,784,9],[1206,811,13],[788,878,8],[887,886,18],[938,885,12],[997,892,14],[514,266,19],[928,540,52],[928,540,34],[668,515,42],[12,308,22],[937,770,14],[1254,832,4],[604,42,20]],
    stamps: [["STAR",289,154,36,4],["HEART",711,50,38,-12],["SPARK",134,320,52,18],["HEART",930,306,38,-12],["HEART",1120,570,36,-8],["GEAR",8,308,86,0],["DROP",70,682,26,0],["STAR",80,450,60,20]],
    lines: [
      "M24 96L136 86Q154 84 156 98L160 116M24 96Q10 100 12 116L30 214Q34 230 52 230L78 226M82 136L190 112Q206 110 210 122L226 200Q226 212 212 216L108 242Q96 244 92 234L66 158Q64 140 82 136ZM70 146L146 186L208 118M92 238L120 174M222 208L160 172",
      "M0 24L58 0Q82 0 84 16Q80 30 60 42L0 80M20 30L66 8M10 56L66 22",
      "M378 98L414 54Q440 44 460 62Q480 90 470 116Q450 126 430 106Q410 74 428 54M378 98Q374 112 392 110L418 90M450 118Q466 200 396 246M474 102Q520 140 542 182M276 246Q310 200 370 186Q404 178 392 210L366 238M230 346Q230 290 280 250Q330 226 380 242Q410 260 396 290Q390 320 350 324L230 346M286 296L336 276Q350 280 336 290L294 302Q284 302 286 296ZM396 302L440 280M446 290C440 210 500 174 552 188Q580 200 574 220Q560 250 500 270Q470 290 446 290ZM470 288C490 330 560 330 572 270Q570 250 566 236M372 320V345",
      "M664 158L756 130Q768 130 772 140L790 258Q790 268 776 270L706 280Q696 280 692 268L664 170ZM664 150L738 110Q746 112 748 130M704 176Q696 206 726 206Q750 196 740 168L732 176Q736 194 720 192Q710 188 716 176ZM712 236L756 220Q768 222 762 232L718 248Q706 246 712 236Z",
      "M888 128C926 130 926 200 890 206C846 196 846 136 888 128ZM836 338C820 290 840 220 910 220C980 220 1000 290 982 318Q940 344 836 338Z",
      "M1088 345V310Q1090 296 1110 294L1320 306M1110 345L1120 320L1132 345M1180 345Q1240 300 1286 356M1250 365L1292 402V468M1256 370L1308 404V470M1270 516L1320 518",
      "M10 626L40 560L96 556M10 626L28 742L96 744M10 626H96M40 560L36 580H96M0 750L16 760L0 768M10 540L0 600",
      "M0 830Q30 790 60 788Q70 780 76 790L60 840Q56 850 60 800M86 788Q100 780 100 790L84 844M96 790L136 796M0 860Q20 890 90 888L240 840M150 824Q170 840 180 822M250 826L230 848",
      "M650 590Q690 580 720 640L740 720Q770 760 762 840L640 860M650 620Q700 620 708 680Q704 740 650 746M704 724Q720 704 740 720L768 790Q764 806 748 804L716 812ZM730 806V820H760M650 660Q640 680 655 686M640 866V900M670 860L684 900M720 856L728 900M690 868V890",
      "M958 582Q970 574 980 586L1014 632Q1010 650 996 640L960 594ZM832 530Q850 564 876 564M620 525Q636 552 668 554L710 525",
      "M930 760C890 710 910 690 938 692C970 696 964 720 950 754C980 710 1010 716 1012 742C1010 770 980 776 952 770C1010 780 1014 812 994 824C970 830 950 804 942 786C950 830 930 850 906 842C880 830 890 800 926 778C870 800 854 770 858 750C866 726 896 734 924 762M938 770L934 740M938 770L966 756M938 770L960 790M938 770L930 800M938 770L906 766",
      "M1226 842Q1250 800 1296 772L1300 794L1320 790M1226 842Q1240 864 1300 866M1276 800Q1290 830 1284 862M1290 826L1320 818",
      "M1074 770Q1100 756 1120 770Q1130 800 1100 800L1108 850M1074 770L1086 852M1078 790H1104M1080 810H1104M1084 830H1106",
    ],
  },
  {
    at: [400, 700],
    dots: [[247,82,14],[282,114,8],[196,183,12],[207,219,7],[190,260,7],[488,26,10],[449,51,8],[222,328,10],[207,386,16],[536,385,12],[510,401,8],[543,423,7],[533,337,8],[680,359,16],[820,262,10],[913,54,10],[938,29,10],[860,458,13],[926,446,11],[947,401,7],[927,505,19],[804,510,10],[687,712,13],[716,759,18],[771,749,8],[899,729,10],[890,766,17],[689,806,11],[753,803,9],[695,849,11],[226,814,12],[382,751,14],[38,546,18],[95,533,8],[75,890,8],[699,902,14],[843,800,17],[843,800,8],[722,280,58],[874,312,6],[900,304,6],[926,298,6]],
    stamps: [["STAR",136,296,38,10],["CAMERA",566,824,84,-12],["DROP",454,400,15,50]],
    lines: [
      "M0 80M150 26Q180 20 190 26Q204 60 180 110C150 170 60 190 0 160",
      "M222 144L338 180M222 144L260 262L294 244L276 212Q276 200 300 212L310 200",
      "M850 70L868 46L870 70M880 204L916 124Q930 116 938 130L900 230L886 252L862 240M960 140L930 220L912 226M940 236L960 200",
      "M82 280L104 276M142 322L130 480Q126 492 116 492L30 488M74 360L90 380V440M90 362L108 382V440M100 440A14 14 0 1 0 101 440Z",
      "M348 330L506 286Q516 290 510 310L512 330Q500 370 476 364Q450 368 436 332L426 336Q430 370 400 384Q372 386 366 366L356 346ZM366 344L410 330Q420 340 416 356Q400 380 380 370Q364 360 366 344ZM446 318L496 302Q506 320 496 340Q480 356 462 344Q446 336 446 318Z",
      "M336 256Q320 290 334 330L352 410Q360 460 330 510C290 570 220 570 206 530C200 500 250 480 270 450C290 410 290 340 266 316Q300 300 306 350Q290 430 330 438Q350 430 350 410M270 362Q280 420 240 430Q140 460 146 520C150 580 200 640 280 636L344 626",
      "M168 456Q190 450 184 476Q174 490 158 482M260 456Q286 460 276 480L264 490M276 506C290 480 320 486 320 518M148 536Q172 540 172 560Q170 574 156 572M190 604Q210 586 226 618V630M260 634Q280 600 306 632",
      "M384 518C330 550 340 620 360 650Q400 680 440 680C500 690 480 740 440 760Q400 780 414 784C470 780 510 760 518 720C520 660 450 640 446 590Q446 560 456 548M228 632C180 660 190 720 220 734Q250 740 270 728Q300 730 298 750Q280 770 254 770Q240 784 270 786C320 780 340 750 334 710Q320 690 290 690Q270 676 290 670L350 686L400 678",
      "M446 590Q420 600 426 620Q434 634 448 632M304 682Q310 650 336 660Q350 670 346 686M300 694Q310 724 334 716M322 746Q304 750 308 770M478 654Q480 690 512 690M482 762Q480 740 510 736",
      "M524 260L560 360L578 410C580 440 540 450 530 500C530 560 580 584 628 576Q636 560 626 556Q600 570 582 546C576 500 620 470 640 440C660 400 660 320 600 312Q570 310 566 330M610 256Q560 270 562 300Q556 340 580 410M604 482C640 530 700 530 704 480C700 430 690 400 726 372C730 450 760 500 730 560C700 610 600 610 544 580M544 570Q520 620 536 660Q550 700 600 688Q640 650 672 630C664 700 620 740 520 730",
      "M566 288Q570 260 592 268M618 440Q612 410 650 414M578 486Q584 456 612 460M582 546Q560 536 568 514L582 514M724 410Q706 420 710 440L730 446M742 480Q714 480 722 506Q730 518 744 512M700 576Q690 556 710 544Q726 544 730 560M630 598Q644 560 678 598M536 660Q540 690 570 684M600 688Q620 690 622 668",
      "M690 300Q730 280 780 280M700 250Q720 280 740 336M760 320Q720 300 680 252M772 300Q740 280 750 250",
      "M960 276L824 316Q820 330 840 340C850 380 800 384 764 382Q770 420 800 444Q810 446 820 440L960 340M796 430L930 340M824 312Q834 330 848 310",
      "M788 564L772 520C770 480 830 460 836 508C830 540 800 556 788 564Z",
      "M720 606L960 560M720 606Q706 610 708 626L724 706Q726 720 744 718L960 682M756 630Q768 622 774 636L778 660Q770 676 760 664ZM748 656Q756 682 776 676Q790 670 788 656M768 678L774 694M814 626L850 642L824 664ZM872 634L960 616",
      "M8 606L120 574Q130 576 132 588L144 630M8 606Q0 620 8 630L36 696L54 698L60 714L74 692L104 680Q112 666 104 650Q116 630 134 634M40 630L92 610Q104 612 96 620L46 640ZM50 646L104 626M52 654L104 636M118 666L150 656L144 644L172 652L156 676L154 666L124 674Z",
      "M96 742L98 768Q150 766 164 776L180 740Q190 740 184 772L200 780Q190 790 166 786Q140 830 80 836M60 780Q84 800 80 836M92 800Q100 776 126 790Q130 800 108 798",
      "M752 890Q780 860 786 840Q800 810 830 808Q870 820 876 860L870 900M848 840Q860 830 858 850L850 880Q838 880 842 860Z",
      "M960 740C930 770 920 810 930 820M920 822Q940 830 960 824M920 842H960M920 850Q916 880 960 880",
    ],
  },
  {
    at: [560, 820],
    dots: [[215,488,12],[218,543,15],[260,573,7],[341,616,16],[396,620,20],[459,604,13],[461,646,8],[421,671,10],[363,676,8],[104,658,10],[170,655,12],[151,692,7],[112,714,8],[135,768,16],[402,898,12],[328,1010,16],[394,990,16]],
    stamps: [["SPARK",134,570,42,42]],
    lines: [
      "M384 566L398 560M318 550Q330 578 350 558M274 530Q300 550 398 566",
      "M0 590L36 562Q40 590 20 640M40 602Q80 600 64 630Q40 660 0 654M0 690Q60 650 66 720V780M0 710Q0 730 18 744",
      "M190 782L178 694Q196 690 198 670Q214 660 206 650Q220 640 212 620C300 610 320 700 344 782M240 620Q290 640 320 782M210 710L230 716L212 726M276 698L258 708L278 714M234 760L276 750M238 764Q250 780 270 770V754M390 780L380 730Q382 720 396 726L410 734Q440 700 480 706",
      "M290 1040Q270 980 300 960L370 950L420 932Q440 930 440 960L440 980C460 1030 440 1070 400 1076M356 1020Q364 1040 376 1026Q386 1040 384 1020M358 1012L374 1010L366 1020ZM420 1016H424M428 1010H432M304 1044H308M400 850Q440 860 450 890L480 900M440 1040Q460 1020 480 1030M190 1080Q190 1040 210 1050L220 1080",
    ],
  },
  {
    at: [190, 920],
    dots: [[247,118,9],[351,230,8],[311,262,11],[856,154,12],[705,230,8],[735,272,10],[761,337,19],[800,327,9],[791,373,10],[956,322,10],[981,342,11],[570,423,10],[547,465,14],[366,423,10],[330,449,11],[360,468,8],[562,284,58],[562,284,32],[555,241,4],[587,248,4],[602,268,4],[603,302,4],[577,323,4],[545,320,4],[523,296,4],[527,264,4],[664,408,8],[356,684,13],[336,741,17],[287,760,12],[492,710,15],[547,740,18],[31,674,11],[90,315,16],[242,538,16],[686,765,80],[930,748,8],[930,770,8]],
    stamps: [["STAR",872,334,48,8],["GEAR",802,239,68,0],["PEOPLE",984,206,76,4],["HEART",120,370,28,0],["HEART",650,757,30,-10],["HEART",714,743,28,0],["STAR",432,745,54,22]],
    lines: [
      "M478 192Q470 176 490 172L560 158Q584 158 586 180V200M478 192L490 220M406 304C410 240 520 200 600 204C680 204 700 260 680 300C650 350 520 380 450 360C410 346 400 330 406 304Z",
      "M400 310Q370 330 370 320Q366 310 390 306Q350 270 366 264Q388 260 390 300L404 296M398 324Q410 350 408 376Q390 388 384 350L390 326",
      "M82 420Q130 410 122 440Q110 460 78 452M110 322C120 250 190 230 240 250C280 280 300 300 308 344C350 330 350 360 340 380Q300 430 274 430Q250 420 264 402Q230 400 200 420Q160 460 140 440Q130 420 160 410C220 380 220 320 190 290Q160 270 114 328M126 284Q190 250 240 306",
      "M98 504L254 478Q280 474 286 500L320 620Q320 640 300 644L130 688Q106 690 100 670L66 550Q60 520 98 504ZM88 548L268 502L296 616L118 662ZM120 650L176 580L200 600L264 630M194 590Q220 560 264 604M140 494L214 460Q224 456 234 464L256 480M70 560Q50 600 60 610L80 640M304 540Q324 560 322 580L312 600M110 690L160 718Q170 718 176 710L240 660",
      "M414 540L414 440Q420 416 440 424L458 500L468 440Q480 420 498 436L490 484M430 510Q420 480 390 490Q380 500 386 520Q370 500 360 520Q350 560 390 556Q420 560 430 510ZM366 550Q366 640 410 650L465 645M430 560Q420 540 466 540",
      "M650 382L740 392Q750 396 750 416L776 408L770 456L748 446Q744 464 730 466L644 456Q632 454 634 440L640 394Q642 382 650 382Z",
      "M856 484Q880 420 960 404Q1020 400 1020 484M820 456Q820 444 850 446L874 450M820 456L856 474M934 406L926 390Q934 364 950 376L944 404M990 410L1034 382Q1060 376 1056 400L1016 440M890 484Q900 440 950 430Q990 430 984 484M920 412L936 430M976 404L970 434M886 434L904 452M1012 440L984 452M1036 398V402M1044 396V400",
      "M1068 272Q1090 280 1140 290M1068 272Q1070 320 1096 340M1140 262Q1096 290 1096 320Q1096 350 1140 350M1096 340Q1100 400 1140 410M1140 380Q1060 390 1066 440L1080 484",
      "M818 774V720Q820 700 840 698H1006Q1028 700 1028 720V774M856 774V734H876V754H890V734H910V774M1070 700Q1080 740 1140 720",
      "M78 172L158 160M158 166L160 210L78 224M100 180V212",
    ],
  },
  {
    at: [0, 960],
    dots: [[96,379,10],[158,387,15],[151,438,19],[96,489,12],[184,474,13],[265,351,9],[306,391,14],[276,420,11],[172,613,15],[95,612,10],[575,475,16],[559,530,18],[526,566,11],[530,608,11],[925,565,13],[72,306,14],[429,314,10],[25,680,12],[450,426,4],[480,407,4]],
    stamps: [["STAR",578,392,36,6],["STAR",330,310,48,0],["HEART",163,538,46,-8],["DROP",56,538,38,-12],["DROP",10,604,28,10],["STAR",12,850,38,10],["HEART",850,944,44,0]],
    lines: [
      "M206 400Q204 360 224 342Q232 340 228 360C216 430 270 474 330 470M206 400Q210 460 250 490C270 520 240 540 240 570Q250 630 276 630L310 626Q320 606 306 598L314 580Q300 560 288 564V598L300 610M288 570Q320 580 380 578Q400 620 410 624L444 622Q456 606 438 596V580M314 576Q340 590 344 608Q330 620 312 620M384 560V580M424 566Q420 600 440 606M466 494Q470 540 446 566V588Q480 580 480 602Q470 620 446 616M344 414Q370 370 420 368Q490 370 514 430Q520 480 470 486L404 500M344 414Q320 430 324 454Q340 510 380 514Q410 500 402 440Q390 400 344 414ZM412 366Q440 350 474 386M476 434H496L488 444ZM488 444Q486 466 476 456M488 444Q490 460 502 450",
      "M536 655L600 606L660 584Q660 610 624 655M600 606Q606 620 622 620Q624 636 636 640",
      "M0 260L30 264L60 456L0 472M0 340Q20 360 20 380Q20 400 0 390M0 464L60 452",
      "M0 110Q60 96 78 140Q80 210 20 216L0 214M0 140L72 214M20 160L16 180M40 180L36 196M68 236L130 332L220 300M68 236L100 222",
      "M80 655Q80 650 130 655M0 690Q40 680 44 720L46 770M62 900V930M8 932L206 950L204 960M360 934L430 942M520 955Q540 930 590 934M730 935L740 960M450 935V960",
      "M460 304Q480 340 520 352Q540 350 540 330L600 320L670 334Q700 330 692 302Q680 286 640 284",
      "M692 655Q720 620 760 655M760 655Q756 630 778 628Q780 640 770 655",
    ],
  },
  {
    at: [340, 1060],
    dots: [[97,45,15],[42,290,15],[796,48,16],[747,322,10],[789,324,12],[542,650,10],[1094,596,11],[1107,629,11],[1126,578,11],[1130,610,10],[790,650,12]],
    stamps: [],
    lines: [
      "M620 278Q620 300 640 306L700 296L826 302Q836 290 820 276M650 350L696 322L700 350M846 355Q850 320 870 335L884 370L900 340Q930 320 934 355",
      "M770 372Q810 370 830 410Q850 430 830 460M790 400Q810 440 840 450M810 555H840Q850 600 830 604L780 596M850 600Q880 640 874 660M1100 560Q1120 540 1140 548M1060 620L1050 660M50 655Q80 620 140 640L150 660M700 655Q720 630 760 640M1130 370Q1110 400 1140 420",
    ],
  },
];

const MAP_FOLDS = "M506 440L540 650M578 440L612 600";

const Wallpaper = () => (
  <Wall width="720" height="1132" viewBox="0 148 720 1132" aria-hidden="true">
    {REGIONS.map((r, i) => (
      <g key={i} transform={`translate(${r.at[0]} ${r.at[1]}) scale(.33333)`}>
        {r.dots.map(([x, y, radius], k) => <circle key={k} cx={x} cy={y} r={radius} />)}
        {r.stamps.map(([name, x, y, size, turn], k) => (
          <path
            key={k}
            d={SHAPES[name]}
            transform={`translate(${x} ${y}) rotate(${turn}) scale(${size / 100})`}
            vectorEffect="non-scaling-stroke"
            strokeWidth="1.4"
            style={undefined}
          />
        ))}
        {r.lines.map((d, k) => <path key={k} d={d} />)}
      </g>
    ))}
    <path d={MAP_FOLDS} transform="translate(260 440) scale(.33333)" strokeDasharray="20 20" />
  </Wall>
);

/* ---------- page ---------- */

const MESSAGES = [
  { joy: 2, time: "21:52", w: 237, tail: true },
  { text: "I said naa", track: -0.42, time: "21:53", w: 225 },
  { text: "It may be ur relatives", track: -0.22, time: "21:53", w: 363 },
  { joy: 2, time: "21:53", w: 237 },
  { text: "U was tensed naa", track: -0.55, time: "21:54", w: 324 },
  { joy: 2, time: "21:54", w: 239 },
  { joy: 1, time: "21:54", w: 184 },
  { text: "Haa", track: -0.9, time: "21:54", w: 190, out: true, tail: true, gap: true },
  { text: "I can't control my laugh", track: -0.38, time: "21:54", w: 392, tail: true, gap: true },
  { joy: 1, time: "21:54", w: 184 },
  { joy: 1, time: "21:54", w: 184 },
  { text: "This monkey", track: -0.38, palm: true, time: "21:54", w: 343, out: true, tail: true, gap: true },
];

const Joys = styled.div`
  display: flex;
  gap: 2px;
  align-self: flex-start;
  padding-top: ${(p) => p.$pt}px;
`;

const PalmSlot = styled.span`
  margin-left: 3px;
  margin-top: -6px;
`;

const Message = ({ m, children }) => {
  const height = m.joy === 1 ? 94 : m.joy ? 86 : m.palm ? 70 : 60;
  return (
    <Bubble $w={m.w} $h={height} $out={m.out} $tail={m.tail} $gap={m.gap} $emoji={m.joy}>
      {m.tail && <TailShape out={m.out} />}
      {m.joy ? (
        <Joys $pt={m.joy === 1 ? 8 : 9}>
          {Array.from({ length: m.joy }, (_, i) => <JoyFace key={i} size={m.joy === 1 ? 67 : 59} />)}
        </Joys>
      ) : (
        <Body $pt={m.palm ? 16 : 11} $track={m.track}>
          {m.text}
          {m.palm && <PalmSlot><FacepalmFigure /></PalmSlot>}
        </Body>
      )}
      <Meta $out={m.out} $pb={m.joy || m.palm ? 7 : 10}>
        {m.time}
        {m.out && <DoubleTick />}
      </Meta>
      {children}
    </Bubble>
  );
};

export default function App() {
  return (
    <Screen>
      <GlobalStyle />
      <Top>
        <StatusBar>
          <StatusSide>
            <SignalIcon />
            <StatusText $ml={8}>0<Dot>.</Dot>00KB/s</StatusText>
          </StatusSide>
          <ClockText $track={0.4}>10:40</ClockText>
          <StatusSide $end>
            <StatusIcons />
            <StatusText $ml={9} $track={-1.3}>56%</StatusText>
            <Battery />
          </StatusSide>
        </StatusBar>
        <TitleBar>
          <BackArrow />
          <Avatar width="70" height="70" viewBox="0 0 70 70">
            <clipPath id="avatarRound"><circle cx="35" cy="35" r="34" /></clipPath>
            <circle cx="35" cy="35" r="35" fill="#647883" />
            <circle cx="35" cy="30.5" r="12" fill="#cfd7df" />
            <path d="M9 70C10 52 22 47 35 47S60 52 61 70Z" fill="#cfd7df" clipPath="url(#avatarRound)" />
          </Avatar>
          <ContactName>Pantu.</ContactName>
          <Actions>
            <ActionSlot $mr={58}><VideoIcon /></ActionSlot>
            <ActionSlot $mr={60}><CallIcon /></ActionSlot>
            <MenuDots />
          </Actions>
        </TitleBar>
      </Top>
      <Chat>
        <Wallpaper />
        <Foreground>
          <Messages>
            {MESSAGES.map((m, i) => (
              <Message key={i} m={m}>
                {i === MESSAGES.length - 1 && (
                  <JumpButton aria-label="Scroll to bottom"><ChevronsDown /></JumpButton>
                )}
              </Message>
            ))}
          </Messages>
          <Composer>
            <Field>
              <SmileIcon />
              <Placeholder>Message</Placeholder>
              <ClipIcon />
              <CameraSlot><CameraIcon /></CameraSlot>
            </Field>
            <MicButton aria-label="Record voice message"><MicIcon /></MicButton>
          </Composer>
        </Foreground>
      </Chat>
    </Screen>
  );
}
